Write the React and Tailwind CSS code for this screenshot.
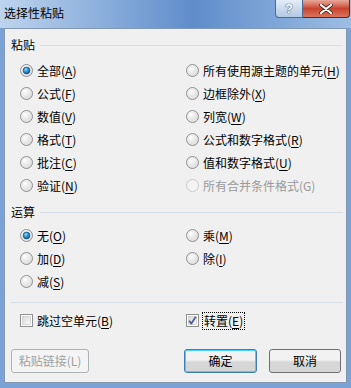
import React from "react";

const FONT = { fontFamily: '"Noto Sans CJK SC", "Liberation Sans", sans-serif' };

const Radio = ({ checked, disabled }) => (
  <svg width="13" height="13" viewBox="0 0 13 13" className="shrink-0">
    <defs>
      <radialGradient id="rfill" cx="0.35" cy="0.3" r="0.8">
        <stop offset="0" stopColor="#ffffff" />
        <stop offset="1" stopColor="#d4d4d4" />
      </radialGradient>
      <radialGradient id="rdot" cx="0.4" cy="0.35" r="0.7">
        <stop offset="0" stopColor="#8fdcff" />
        <stop offset="0.5" stopColor="#2a8fd0" />
        <stop offset="1" stopColor="#124f8a" />
      </radialGradient>
    </defs>
    <circle cx="6.5" cy="6.5" r="6" fill={disabled ? "#f4f4f4" : "url(#rfill)"} stroke={disabled ? "#cacaca" : "#8f8f8f"} />
    <circle cx="6.5" cy="6.5" r="4.6" fill="none" stroke={disabled ? "#f0f0f0" : "#e6e6e6"} strokeWidth="0.8" />
    {checked && <circle cx="6.5" cy="6.5" r="3.4" fill="url(#rdot)" stroke="#1d3f66" strokeWidth="0.6" />}
  </svg>
);

const Check = ({ checked }) => (
  <svg width="13" height="13" viewBox="0 0 13 13" className="shrink-0">
    <defs>
      <linearGradient id="cfill" x1="0" y1="0" x2="1" y2="1">
        <stop offset="0" stopColor="#d8d8d8" />
        <stop offset="1" stopColor="#fbfbfb" />
      </linearGradient>
    </defs>
    <rect x="0.5" y="0.5" width="12" height="12" fill="#fff" stroke="#8e8f8f" />
    <rect x="2.5" y="2.5" width="8" height="8" fill="url(#cfill)" stroke="#c4c4c4" strokeWidth="0.6" />
    {checked && <path d="M3.2 6.8 L5.4 9.6 L9.8 2.8" fill="none" stroke="#4b5e9b" strokeWidth="1.8" strokeLinejoin="round" />}
  </svg>
);

const Label = ({ text, k, disabled }) => (
  <span className={disabled ? "text-[#9a9a9a]" : "text-black"}>
    {text}(
    {disabled ? k : <span className="underline underline-offset-[2px]">{k}</span>})
  </span>
);

const Opt = ({ text, k, checked, disabled }) => (
  <div className="flex items-center gap-[4px] h-[23px]">
    <Radio checked={checked} disabled={disabled} />
    <Label text={text} k={k} disabled={disabled} />
  </div>
);

const Header = ({ children }) => (
  <div className="flex items-center h-[16px] gap-[5px]">
    <span className="text-black">{children}</span>
    <div className="flex-1 h-px bg-[#d5dfe5]" />
  </div>
);

const Btn = ({ children, primary, disabled, w }) => (
  <div
    className={`h-[24px] ${w} rounded-[3px] border flex items-center justify-center ${
      primary
        ? "border-[#3c7fb1] shadow-[inset_0_0_0_1px_#48d0f8]"
        : disabled
        ? "border-[#adb2b5]"
        : "border-[#707070]"
    } ${disabled ? "bg-[#f4f4f4] text-[#a0a0a0]" : "bg-gradient-to-b from-[#f2f2f2] from-45% to-[#d6d6d6] to-55% text-black"}`}
  >
    {children}
  </div>
);

export default function App() {
  return (
    <div className="w-[351px] h-[388px] bg-[#7aa2d6] flex flex-col text-[12px] leading-none" style={FONT}>
      <div className="h-[28px] flex items-start bg-gradient-to-r from-[#bdd4ee] via-[#5f8dca] via-55% to-[#9dbde4] relative">
        <span className="pl-[4px] pt-[7px] text-[12px] text-black">选择性粘贴</span>
        <div className="ml-auto mr-[1px] flex">
          <div className="w-[28px] h-[18px] rounded-bl-[4px] border border-t-0 border-[#4b6a94] bg-gradient-to-b from-[#e4edf8] to-[#b3c8e4] flex items-center justify-center">
            <span className="text-[13px] font-bold text-white [text-shadow:0_0_1px_#2c3c55,0_0_1px_#2c3c55]" style={{ fontFamily: '"Liberation Sans", sans-serif' }}>?</span>
          </div>
          <div className="w-[47px] h-[18px] rounded-br-[4px] border border-t-0 border-l-0 border-[#5a2a22] bg-gradient-to-b from-[#e8a99c] via-[#c8442e] to-[#d9745d] flex items-center justify-center">
            <svg width="14" height="10" viewBox="0 0 14 10">
              <path d="M2 1 L12 9 M12 1 L2 9" stroke="#4a2018" strokeWidth="3.6" strokeLinecap="round" />
              <path d="M2 1 L12 9 M12 1 L2 9" stroke="#ffffff" strokeWidth="2.2" strokeLinecap="round" />
            </svg>
          </div>
        </div>
      </div>
      <div className="mx-[4px] h-[355px] bg-[#f0f0f0] border border-[#8497b0] pl-[6px] pr-[3px] pt-[8px] flex flex-col">
        <Header>粘贴</Header>
        <div className="mt-[6px] grid grid-cols-[166px_1fr] pl-[9px]">
          <Opt text="全部" k="A" checked />
          <Opt text="所有使用源主题的单元" k="H" />
          <Opt text="公式" k="F" />
          <Opt text="边框除外" k="X" />
          <Opt text="数值" k="V" />
          <Opt text="列宽" k="W" />
          <Opt text="格式" k="T" />
          <Opt text="公式和数字格式" k="R" />
          <Opt text="批注" k="C" />
          <Opt text="值和数字格式" k="U" />
          <Opt text="验证" k="N" />
          <Opt text="所有合并条件格式" k="G" disabled />
        </div>
        <div className="mt-[7px]">
          <Header>运算</Header>
        </div>
        <div className="mt-[4px] grid grid-cols-[166px_1fr] pl-[9px]">
          <Opt text="无" k="O" checked />
          <Opt text="乘" k="M" />
          <Opt text="加" k="D" />
          <Opt text="除" k="I" />
          <Opt text="减" k="S" />
          <div />
        </div>
        <div className="mt-[9px] h-px bg-[#d5dfe5]" />
        <div className="mt-[6px] grid grid-cols-[166px_1fr] pl-[9px]">
          <div className="flex items-center gap-[4px] h-[23px]">
            <Check />
            <Label text="跳过空单元" k="B" />
          </div>
          <div className="flex items-center gap-[3px] h-[23px]">
            <Check checked />
            <span className="border border-dotted border-black px-[1px] py-[2px]">
              <Label text="转置" k="E" />
            </span>
          </div>
        </div>
        <div className="mt-[17px] flex items-center mr-[2px]">
          <Btn disabled w="w-[78px]">粘贴链接(L)</Btn>
          <div className="flex-1" />
          <Btn primary w="w-[73px]">确定</Btn>
          <div className="w-[12px]" />
          <Btn w="w-[72px]">取消</Btn>
        </div>
      </div>
    </div>
  );
}
